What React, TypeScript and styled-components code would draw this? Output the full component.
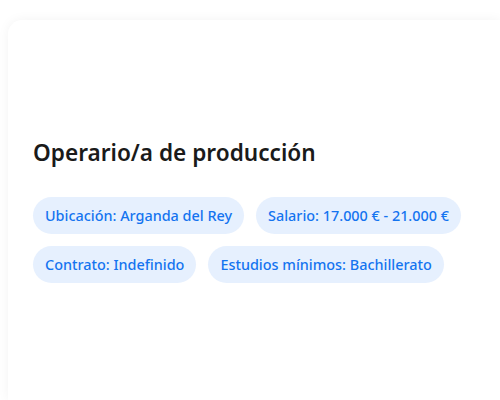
import styled, { createGlobalStyle } from "styled-components"

const tags = [
  "Ubicación: Arganda del Rey",
  "Salario: 17.000 € - 21.000 €",
  "Contrato: Indefinido",
  "Estudios mínimos: Bachillerato",
]

export default function App() {
  return (
    <>
      <Global />
      <Card>
        <Title>Operario/a de producción</Title>
        <Tags>
          {tags.map((t) => (
            <Tag key={t}>{t}</Tag>
          ))}
        </Tags>
      </Card>
    </>
  )
}

const Global = createGlobalStyle`
  html, body {
    margin: 0;
    background: #fff;
    overflow: hidden;
  }
  body {
    padding: 20px 0 0 8px;
    font-family: "Noto Sans", "Segoe UI", sans-serif;
  }
`

// the card runs past the right and bottom edges of the window
const Card = styled.div`
  width: 492px;
  height: 380px;
  box-sizing: border-box;
  padding: 118px 25px 24px;
  background: #fff;
  border-radius: 14px 0 0 0;
  box-shadow: 0 0 12px rgba(0, 0, 0, 0.05);
`

const Title = styled.h2`
  margin: 0 0 30px;
  font-size: 22.6px;
  font-weight: 600;
  line-height: 1.3;
  color: #1a1a1a;
`

const Tags = styled.div`
  display: flex;
  flex-wrap: wrap;
  gap: 12px;
  max-width: 440px;
`

const Tag = styled.span`
  display: inline-flex;
  align-items: center;
  height: 37px;
  padding: 0 12px;
  border-radius: 19px;
  background: #e6f0fe;
  color: #1474f0;
  font-size: 14.4px;
  font-weight: 500;
`
